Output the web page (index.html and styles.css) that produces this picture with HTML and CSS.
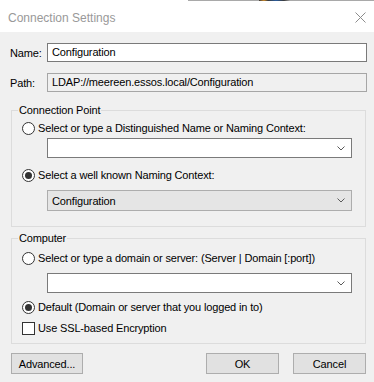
FILE: index.html
```html
<!DOCTYPE html>
<html lang="en">
<head>
    <meta charset="UTF-8">
    <title>Connection Settings</title>
    <link rel="stylesheet" href="styles.css">
</head>
<body>
    <div class="edge"></div>
    <div class="titlebar">
        <span class="title">Connection Settings</span>
        <svg class="close" width="11" height="11" viewBox="0 0 11 11">
            <path d="M0.5 0.5 L10.5 10.5 M10.5 0.5 L0.5 10.5" stroke="#8c8c8c" stroke-width="1" fill="none"/>
        </svg>
    </div>
    <div class="dialog">
        <div class="field-row">
            <label class="field-label">Name:</label>
            <div class="textbox">Configuration</div>
        </div>
        <div class="field-row">
            <label class="field-label">Path:</label>
            <div class="textbox readonly">LDAP://meereen.essos.local/Configuration</div>
        </div>

        <fieldset class="group group-point">
            <legend>Connection Point</legend>
            <div class="option"><span class="radio"></span>Select or type a Distinguished Name or Naming Context:</div>
            <div class="combo">
                <span class="combo-text"></span>
                <svg class="chevron" width="8" height="5" viewBox="0 0 8 5"><path d="M0.5 0.5 L4 4 L7.5 0.5" stroke="#5a5a5a" fill="none"/></svg>
            </div>
            <div class="option"><span class="radio checked"></span>Select a well known Naming Context:</div>
            <div class="combo list">
                <span class="combo-text">Configuration</span>
                <svg class="chevron" width="8" height="5" viewBox="0 0 8 5"><path d="M0.5 0.5 L4 4 L7.5 0.5" stroke="#5a5a5a" fill="none"/></svg>
            </div>
        </fieldset>

        <fieldset class="group group-computer">
            <legend>Computer</legend>
            <div class="option"><span class="radio"></span>Select or type a domain or server: (Server | Domain [:port])</div>
            <div class="combo">
                <span class="combo-text"></span>
                <svg class="chevron" width="8" height="5" viewBox="0 0 8 5"><path d="M0.5 0.5 L4 4 L7.5 0.5" stroke="#5a5a5a" fill="none"/></svg>
            </div>
            <div class="option"><span class="radio checked"></span>Default (Domain or server that you logged in to)</div>
            <div class="option check-row"><span class="checkbox"></span>Use SSL-based Encryption</div>
        </fieldset>

        <div class="buttons">
            <button class="btn btn-advanced">Advanced...</button>
            <span class="spacer"></span>
            <button class="btn">OK</button>
            <button class="btn">Cancel</button>
        </div>
    </div>
</body>
</html>
```

FILE: styles.css
```css
body {
    margin: 0;
    width: 374px;
    height: 382px;
    overflow: hidden;
    background: #f0f0f0;
    font-family: 'Liberation Sans', Arial, sans-serif;
    font-size: 11px;
    letter-spacing: -0.15px;
    color: #000;
}

/* edge of the window behind */
.edge {
    height: 1px;
    background: linear-gradient(to right, #ffffff 0, #ffffff 188px, #a9a9a9 188px, #a9a9a9 259px, #3b3b3b 259px, #c9882c 264px, #3b3b3b 268px, #2a5c9c 276px, #3b3b3b 284px, #a9a9a9 290px, #a9a9a9 100%);
}

.titlebar {
    height: 31px;
    background: #fff;
    display: flex;
    align-items: center;
    padding: 0 7px 0 8px;
}

.title {
    flex: 1;
    font-size: 12px;
    letter-spacing: 0;
    color: #999999;
    padding-top: 2px;
}

.close {
    margin-right: 1px;
    margin-top: 1px;
}

.dialog {
    padding: 11px 7px 0 10px;
}

.field-row {
    display: flex;
    align-items: center;
    height: 19px;
    margin-bottom: 11px;
}

.field-row:last-of-type {
    margin-bottom: 0;
}

.field-label {
    width: 37px;
    flex: none;
}

.textbox {
    flex: 1;
    height: 19px;
    box-sizing: border-box;
    border: 1px solid #7a7a7a;
    background: #fff;
    padding-left: 4px;
    line-height: 17px;
}

.textbox.readonly {
    background: #f0f0f0;
    border-color: #a6a6a6;
}

/* group boxes */
.group {
    margin: 9px 1px 0 1px;
    border: 1px solid #dcdcdc;
    padding: 4px 13px 15px 10px;
}

.group legend {
    margin-left: -4px;
    padding: 0 1px;
    line-height: 14px;
}

.group-computer {
    margin-top: 4px;
    padding-top: 6px;
    padding-bottom: 8px;
}

.option {
    display: flex;
    align-items: center;
    height: 14px;
    white-space: nowrap;
}

.radio,
.checkbox {
    width: 13px;
    height: 13px;
    box-sizing: border-box;
    border: 1px solid #333;
    background: #fff;
    margin-right: 3px;
    flex: none;
    display: flex;
    align-items: center;
    justify-content: center;
}

.radio {
    border-radius: 50%;
}

.radio.checked::after {
    content: "";
    width: 7px;
    height: 7px;
    border-radius: 50%;
    background: #333;
}

.combo {
    margin: 3px 0 10px 25px;
    height: 20px;
    box-sizing: border-box;
    border: 1px solid #7a7a7a;
    background: #fff;
    display: flex;
    align-items: center;
    padding: 0 6px 0 4px;
}

.combo.list {
    height: 21px;
    margin-top: 8px;
    margin-bottom: 0;
    background: #e5e5e5;
    border-color: #adadad;
}

.combo-text {
    flex: 1;
}

.group-computer .combo {
    margin-top: 8px;
    margin-bottom: 7px;
}

.check-row {
    margin-top: 7px;
}

/* buttons */
.buttons {
    display: flex;
    margin: 9px 1px 0 1px;
}

.spacer {
    flex: 1;
}

.btn {
    width: 73px;
    height: 21px;
    border: 1px solid #adadad;
    background: #e1e1e1;
    font-family: inherit;
    font-size: 11px;
    letter-spacing: -0.15px;
    color: #000;
    padding: 0;
    margin-left: 14px;
}

.btn-advanced {
    width: 72px;
    margin-left: 0;
}
```
